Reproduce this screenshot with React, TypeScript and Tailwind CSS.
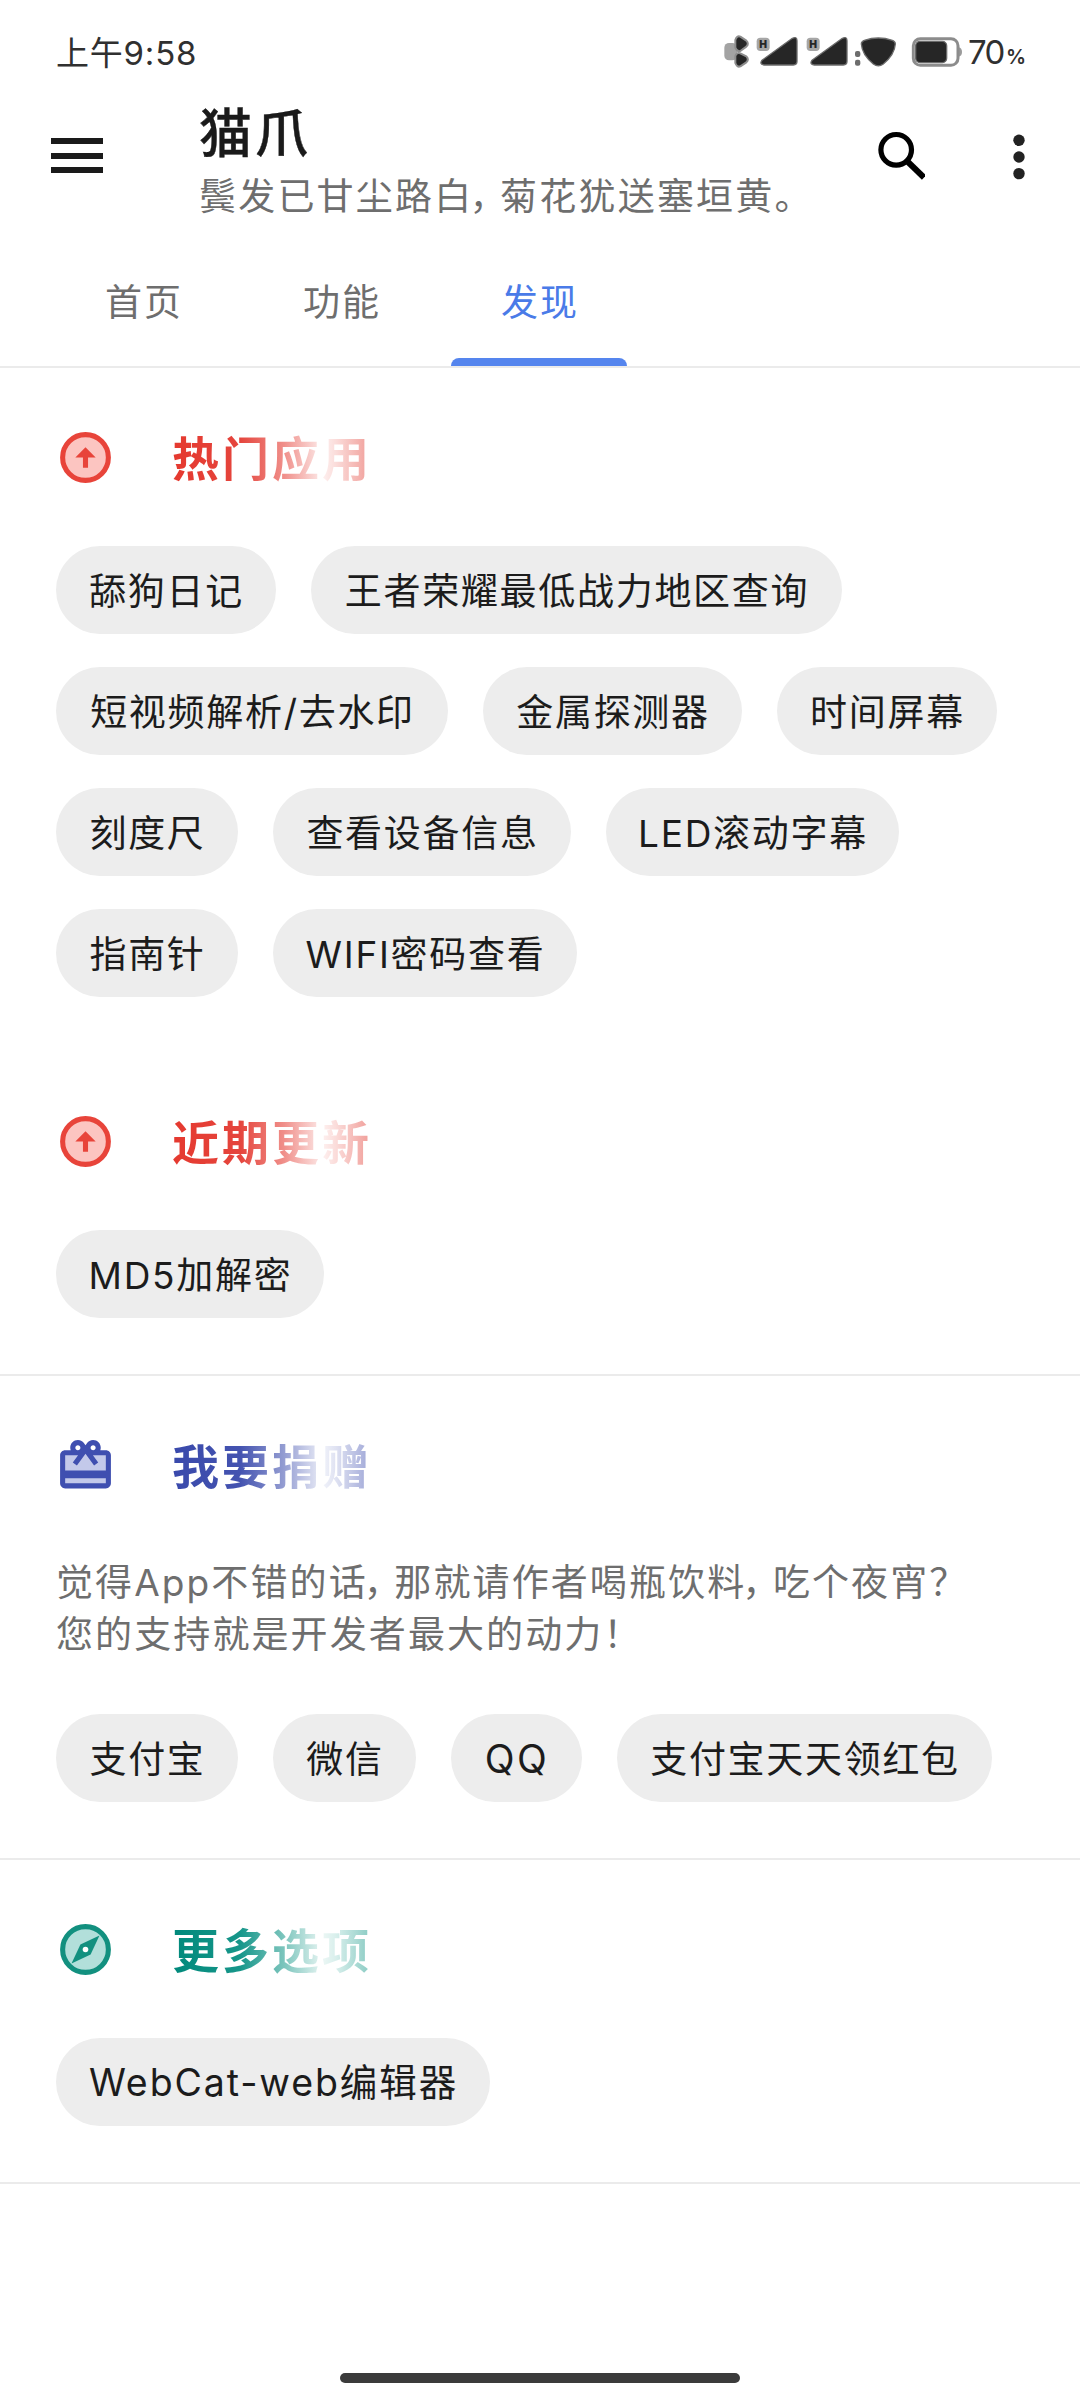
import React from "react";

type Tone = "red" | "indigo" | "teal";

interface Chip {
  label: string;
  width: string;
  textSize?: string;
}

const hotApps: Chip[] = [
  { label: "舔狗日记", width: "w-[220px]" },
  { label: "王者荣耀最低战力地区查询", width: "w-[531px]" },
  { label: "短视频解析/去水印", width: "w-[392px]" },
  { label: "金属探测器", width: "w-[259px]" },
  { label: "时间屏幕", width: "w-[220px]" },
  { label: "刻度尺", width: "w-[182px]" },
  { label: "查看设备信息", width: "w-[298px]" },
  { label: "LED滚动字幕", width: "w-[293px]" },
  { label: "指南针", width: "w-[182px]" },
  { label: "WIFI密码查看", width: "w-[304px]" },
];

const recentApps: Chip[] = [{ label: "MD5加解密", width: "w-[268px]" }];

const donateOptions: Chip[] = [
  { label: "支付宝", width: "w-[182px]" },
  { label: "微信", width: "w-[143px]" },
  { label: "QQ", width: "w-[131px]", textSize: "text-[39px] tracking-[2.5px]" },
  { label: "支付宝天天领红包", width: "w-[375px]" },
];

const moreOptions: Chip[] = [
  { label: "WebCat-web编辑器", width: "w-[434px]", textSize: "text-[37.5px] tracking-[1.9px]" },
];

const tabs = ["首页", "功能", "发现"];

const toneGradient: Record<Tone, string> = {
  red: "bg-[linear-gradient(90deg,#e5392f_0%,#e5453d_34%,#f08f8a_56%,#fdeeed_76%,#fbdcda_82%,#f09a95_100%)]",
  indigo:
    "bg-[linear-gradient(90deg,#3949ab_0%,#4453b0_34%,#949dd2_56%,#eff1f9_76%,#dfe2f2_82%,#9ca4d6_100%)]",
  teal: "bg-[linear-gradient(90deg,#00897b_0%,#17968a_34%,#7cc5bd_56%,#eaf6f4_76%,#d8efec_82%,#86c9c1_100%)]",
};

function ArrowCircleIcon() {
  return (
    <svg viewBox="0 0 24 24" className="size-[61px]">
      <circle cx="12" cy="12" r="9" fill="#fcc5c1" stroke="#e8443a" strokeWidth="2" />
      <path fill="#e8443a" d="M12 8l4 4h-3v4h-2v-4H8z" />
    </svg>
  );
}

function GiftIcon() {
  return (
    <svg viewBox="0 0 24 24" className="size-[61px]">
      <path fill="#c3c9ea" d="M3 7h18v13H3z" />
      <path
        fill="#3f4fb0"
        d="M20 6h-2.18c.11-.31.18-.65.18-1 0-1.66-1.34-3-3-3-1.05 0-1.96.54-2.5 1.35l-.5.67-.5-.68C10.96 2.54 10.05 2 9 2 7.34 2 6 3.34 6 5c0 .35.07.69.18 1H4c-1.11 0-1.99.89-1.99 2L2 19c0 1.11.89 2 2 2h16c1.11 0 2-.89 2-2V8c0-1.11-.89-2-2-2zm-5-2c.55 0 1 .45 1 1s-.45 1-1 1-1-.45-1-1 .45-1 1-1zM9 4c.55 0 1 .45 1 1s-.45 1-1 1-1-.45-1-1 .45-1 1-1zm11 15H4v-2h16v2zm0-5H4V8h5.08L7 10.83 8.62 12 11 8.76l1-1.36 1 1.36L15.38 12 17 10.83 14.92 8H20v6z"
      />
    </svg>
  );
}

function CompassIcon() {
  return (
    <svg viewBox="0 0 24 24" className="size-[61px]">
      <circle cx="12" cy="12" r="9" fill="#b2dfda" stroke="#12907f" strokeWidth="2" />
      <path fill="#12907f" d="M6.5 17.5l7.51-3.49L17.5 6.5 9.99 9.99z" />
      <circle cx="12" cy="12" r="1.1" fill="#fff" />
    </svg>
  );
}

function StatusIcons() {
  return (
    <svg viewBox="72 42 720 105" className="h-[35px] w-[240px]">
      {/* bluetooth */}
      <rect x="73" y="69" width="38" height="52" rx="14" fill="#a3a3a3" />
      <g fill="#262626" stroke="#8d8d8d" strokeWidth="6" strokeLinejoin="round">
        <path d="M106 60q4-14 15-10l18 12q9 9 0 18l-18 13q-10 3-15-10z" />
        <path d="M106 108q4-12 15-8l18 9q9 9 0 18l-18 12q-10 4-15-10z" />
      </g>
      {/* two sim signals */}
      {[0, 150].map((dx) => (
        <g key={dx} transform={`translate(${dx} 0)`}>
          <rect x="170" y="53" width="39" height="40" rx="11" fill="#a6a6a6" />
          <text
            x="189.500"
            y="84"
            textAnchor="middle"
            className="fill-[#262626] font-['Inter',sans-serif] text-[31px] font-black"
          >
            H
          </text>
          <path
            d="M186 121L277 55q14-7 14 7v62q0 11-11 11h-87q-16-3-7-14z"
            fill="#262626"
            stroke="#6b6b6b"
            strokeWidth="4"
          />
        </g>
      ))}
      {/* wifi */}
      <rect x="465" y="93" width="16" height="18" rx="6" fill="#6d6d6d" />
      <rect x="465" y="119" width="16" height="18" rx="6" fill="#6d6d6d" />
      <path
        d="M484 72q0-8 9-11 42-14 84 0 9 3 9 11-2 32-36 60-15 11-30 0-34-28-36-60z"
        fill="#262626"
        stroke="#6b6b6b"
        strokeWidth="4"
      />
      {/* battery */}
      <path d="M776 82q10 2 10 14t-10 14z" fill="#9b9b9b" />
      <rect x="640" y="56" width="134" height="80" rx="21" fill="#fff" stroke="#8c8c8c" strokeWidth="9" />
      <rect x="647" y="64" width="93" height="64" rx="13" fill="#262626" stroke="#6b6b6b" strokeWidth="4" />
    </svg>
  );
}

function StatusBar() {
  return (
    <div className="flex h-[103px] items-center justify-between pl-14 pr-[54px] text-[#303030]">
      <span className="pt-[2px] text-[33px] leading-[50px] tracking-[0.8px]">上午9:58</span>
      <div className="flex items-center">
        <StatusIcons />
        <span className="ml-1 text-[33px] leading-[50px] tracking-[-1.5px]">70</span>
        <span className="ml-[2px] pt-[10px] text-[20px] font-semibold leading-[30px]">%</span>
      </div>
    </div>
  );
}

function AppBar() {
  return (
    <header className="flex h-[124px] pl-[51px]">
      <div className="mt-[35px] flex h-[35px] w-[52px] flex-col justify-between">
        <span className="h-[6px] bg-[#1a1a1a]" />
        <span className="h-[6px] bg-[#1a1a1a]" />
        <span className="h-[6px] bg-[#1a1a1a]" />
      </div>
      <div className="ml-[96px] flex-1">
        <h1 className="text-[53px] font-medium leading-[62px] tracking-[3px] text-[#1a1a1a] [-webkit-text-stroke:0.4px_#1a1a1a]">
          猫爪
        </h1>
        <p className="pt-[2px] text-[37px] leading-[60px] tracking-[2.2px] text-[#6e6e6e] [font-feature-settings:'halt']">
          鬓发已甘尘路白<span className="-ml-[4px] mr-[10px]">，</span>菊花犹送塞垣黄。
        </p>
      </div>
      <svg viewBox="0 0 50 50" className="mt-[27px] size-[50px]">
        <circle cx="21.2" cy="19.800" r="15.300" fill="none" stroke="#000" strokeWidth="5.200" />
        <path d="M33 32l16 15.500" stroke="#000" strokeWidth="6" />
      </svg>
      <svg viewBox="0 0 12 46" className="ml-[88px] mr-[55px] mt-[31px] h-[46px] w-[12px]">
        <circle cx="6" cy="6.300" r="5.700" fill="#222" />
        <circle cx="6" cy="23" r="5.700" fill="#222" />
        <circle cx="6" cy="39.600" r="5.700" fill="#222" />
      </svg>
    </header>
  );
}

function TabBar() {
  return (
    <nav className="flex h-[141px] items-end border-b-2 border-[#ebebeb] pl-[44px]">
      {tabs.map((tab) => {
        const active = tab === "发现";
        return (
          <div key={tab} className="flex w-[198px] flex-col items-center justify-end px-[11px]">
            <span
              className={
                active
                  ? "pb-[27px] pl-[2px] text-[37px] leading-[56px] tracking-[2px] text-[#4a7be8]"
                  : "pb-[27px] pl-[2px] text-[37px] leading-[56px] tracking-[2px] text-[#6e6e6e]"
              }
            >
              {tab}
            </span>
            <span className={active ? "h-2 w-full rounded-t-lg bg-[#5585ee]" : "h-2 w-full"} />
          </div>
        );
      })}
    </nav>
  );
}

function SectionTitle({ icon, title, tone }: { icon: React.ReactNode; title: string; tone: Tone }) {
  return (
    <div className="-ml-px flex h-[178px] items-center">
      {icon}
      <h2
        className={`ml-[56px] mt-[4px] bg-clip-text text-[47px] font-bold leading-[70px] tracking-[3px] text-transparent ${toneGradient[tone]}`}
      >
        {title}
      </h2>
    </div>
  );
}

function ChipGroup({ chips }: { chips: Chip[] }) {
  return (
    <div className="flex flex-wrap gap-x-[35px] gap-y-[33px]">
      {chips.map((chip) => (
        <button
          key={chip.label}
          className={`flex h-[88px] items-center justify-center whitespace-nowrap rounded-full bg-[#ededed] pl-px pt-[3px] text-[#1c1c1c] ${chip.width} ${chip.textSize ?? "text-[37px] tracking-[1.7px]"}`}
        >
          {chip.label}
        </button>
      ))}
    </div>
  );
}

function Section({
  icon,
  title,
  tone,
  chips,
  divider = true,
  children,
}: {
  icon: React.ReactNode;
  title: string;
  tone: Tone;
  chips: Chip[];
  divider?: boolean;
  children?: React.ReactNode;
}) {
  return (
    <section className={divider ? "border-b-2 border-[#ebebeb] px-14 pb-14" : "px-14 pb-[55px]"}>
      <SectionTitle icon={icon} title={title} tone={tone} />
      {children}
      <ChipGroup chips={chips} />
    </section>
  );
}

export default function App() {
  return (
    <div
      lang="zh-CN"
      className="flex h-[2400px] w-[1080px] flex-col bg-white font-['Inter','Noto_Sans_CJK_SC',sans-serif]"
    >
      <StatusBar />
      <AppBar />
      <TabBar />
      <main className="flex-1">
        <Section icon={<ArrowCircleIcon />} title="热门应用" tone="red" chips={hotApps} divider={false} />
        <Section icon={<ArrowCircleIcon />} title="近期更新" tone="red" chips={recentApps} />
        <Section icon={<GiftIcon />} title="我要捐赠" tone="indigo" chips={donateOptions}>
          <p className="mb-[53px] whitespace-nowrap pt-[3px] text-[37px] leading-[52px] tracking-[2.1px] text-[#6e6e6e] [font-feature-settings:'halt']">
            觉得App不错的话<span className="-ml-[4px] mr-[10px]">，</span>那就请作者喝瓶饮料
            <span className="-ml-[4px] mr-[10px]">，</span>吃个夜宵？
            <br />
            您的支持就是开发者最大的动力！
          </p>
        </Section>
        <Section icon={<CompassIcon />} title="更多选项" tone="teal" chips={moreOptions} />
      </main>
      <div className="mb-[17px] h-[10px] w-[400px] self-center rounded-full bg-[#3b3b3b]" />
    </div>
  );
}
